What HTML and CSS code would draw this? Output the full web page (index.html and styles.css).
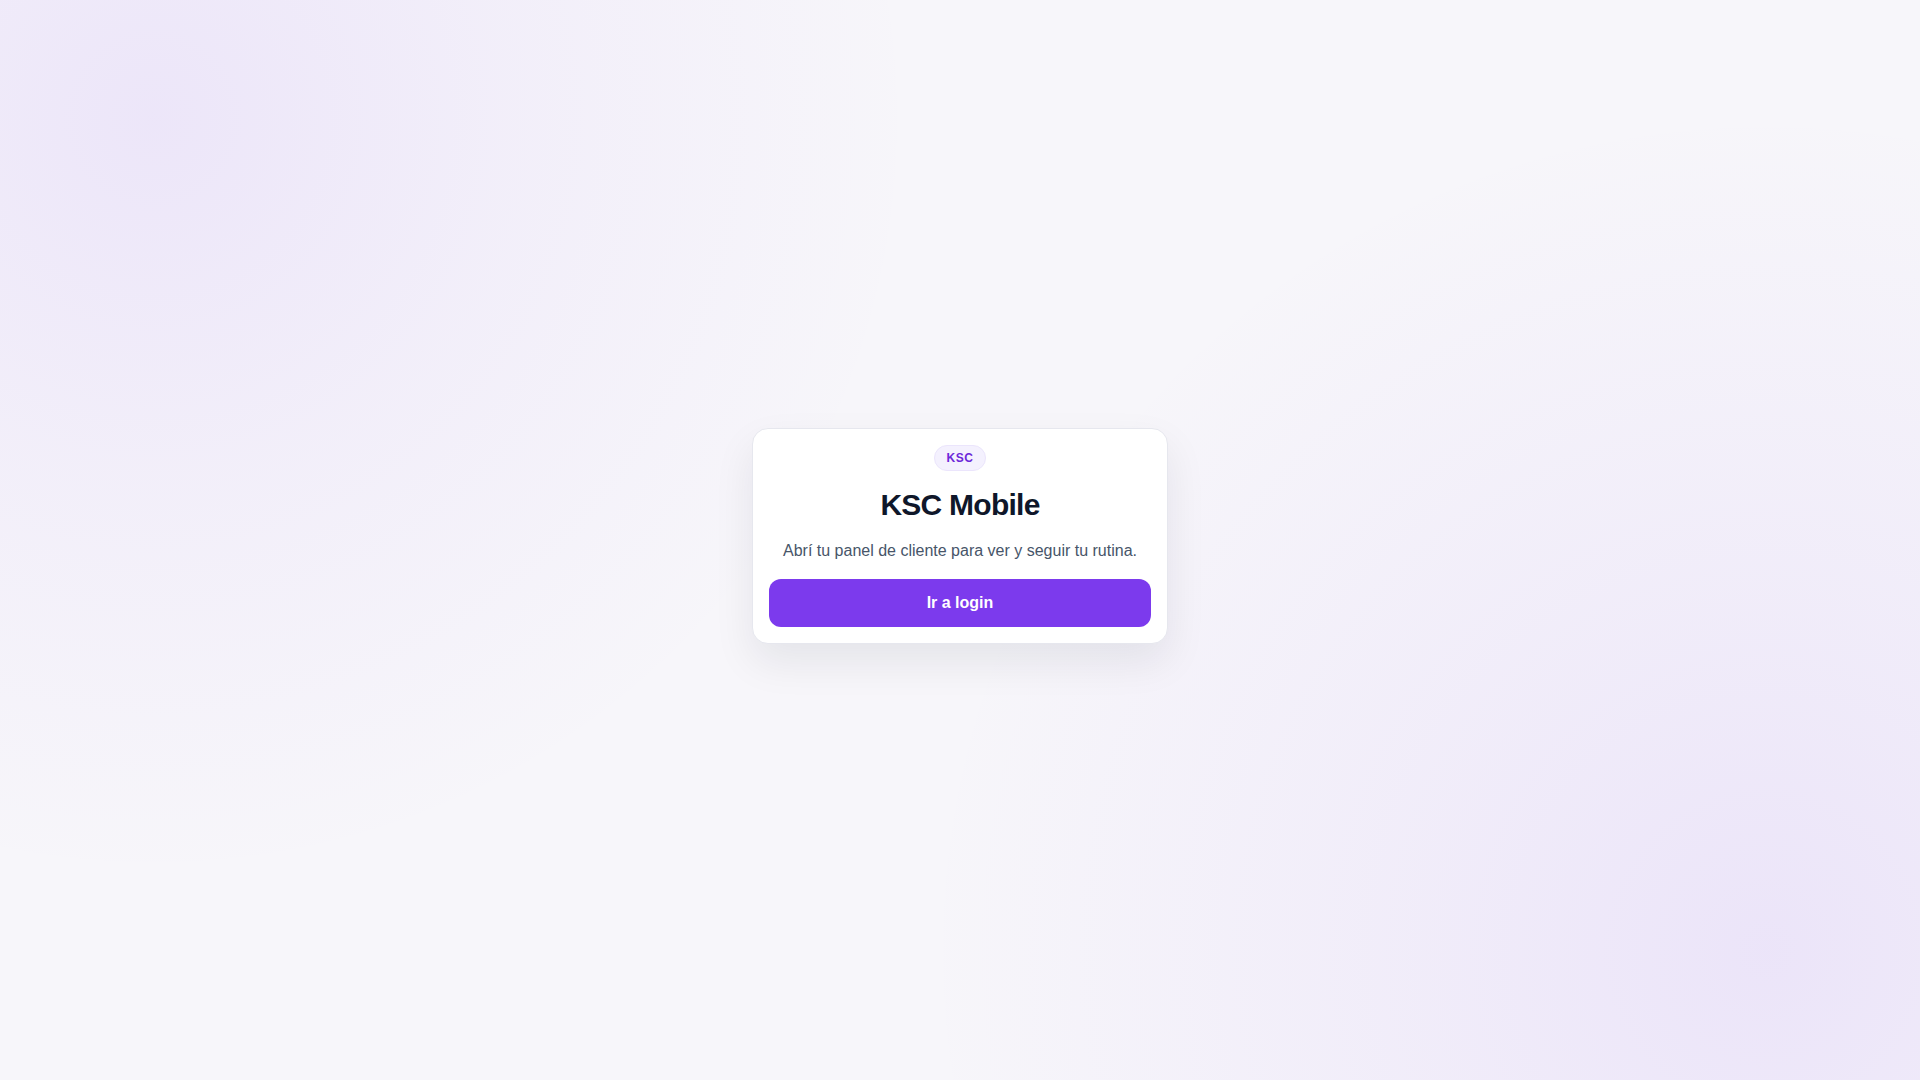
FILE: index.html
```html
<!DOCTYPE html>
<html lang="es">
<head>
<meta charset="utf-8">
<title>KSC Mobile</title>
<link rel="stylesheet" href="styles.css">
</head>
<body>
<main class="page">
  <section class="card">
    <span class="badge">KSC</span>
    <h1 class="title">KSC Mobile</h1>
    <p class="lead">Abrí tu panel de cliente para ver y seguir tu rutina.</p>
    <a class="btn" href="#">Ir a login</a>
  </section>
</main>
</body>
</html>
```

FILE: styles.css
```css
* { box-sizing: border-box; }
html, body { margin: 0; padding: 0; }
body {
  font-family: "Liberation Sans", Arial, sans-serif;
  background-color: #f7f6fa;
  background-image:
    radial-gradient(circle at 8% 11%, rgba(124, 58, 237, 0.085) 0, rgba(124, 58, 237, 0.04) 18%, rgba(124, 58, 237, 0) 38%),
    radial-gradient(circle at 92% 88%, rgba(124, 58, 237, 0.095) 0, rgba(124, 58, 237, 0.05) 18%, rgba(124, 58, 237, 0) 42%);
  min-height: 100vh;
}
.page {
  min-height: 100vh;
  display: flex;
  align-items: center;
  justify-content: center;
  padding-bottom: 9px;
}
.card {
  width: 416px;
  background: #ffffff;
  border: 1px solid #e6e7ee;
  border-radius: 16px;
  padding: 16px;
  display: flex;
  flex-direction: column;
  align-items: center;
  box-shadow: 0 18px 40px rgba(15, 23, 42, 0.08);
}
.badge {
  display: inline-block;
  height: 26px;
  line-height: 24px;
  padding: 0 12px;
  border-radius: 999px;
  background: #f4f1fe;
  border: 1px solid #ebe5fc;
  color: #6d28d9;
  font-size: 12px;
  font-weight: 700;
  letter-spacing: 0.04em;
}
.title {
  margin: 16px 0 0;
  font-size: 30px;
  line-height: 36px;
  font-weight: 700;
  letter-spacing: -0.025em;
  color: #0f172a;
}
.lead {
  margin: 16px 0 0;
  font-size: 16px;
  line-height: 24px;
  color: #475569;
  text-align: center;
}
.btn {
  margin-top: 16px;
  display: flex;
  align-items: center;
  justify-content: center;
  width: 100%;
  height: 48px;
  border-radius: 12px;
  background: #7c3aed;
  color: #ffffff;
  font-size: 16px;
  font-weight: 700;
  text-decoration: none;
}
```
